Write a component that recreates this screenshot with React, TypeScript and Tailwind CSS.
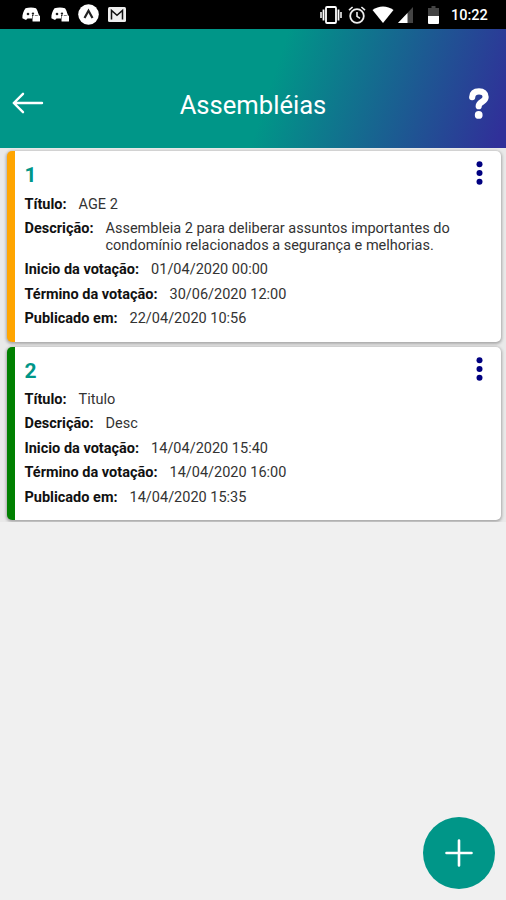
import { ReactNode } from "react";

type Assembly = {
  id: number;
  accent: string;
  title: string;
  description: string;
  start: string;
  end: string;
  published: string;
};

const assemblies: Assembly[] = [
  {
    id: 1,
    accent: "border-[#ffa500]",
    title: "AGE 2",
    description:
      "Assembleia 2 para deliberar assuntos importantes do condomínio relacionados a segurança e melhorias.",
    start: "01/04/2020 00:00",
    end: "30/06/2020 12:00",
    published: "22/04/2020 10:56",
  },
  {
    id: 2,
    accent: "border-[#008000]",
    title: "Titulo",
    description: "Desc",
    start: "14/04/2020 15:40",
    end: "14/04/2020 16:00",
    published: "14/04/2020 15:35",
  },
];

function DiscordIcon() {
  return (
    <svg width="18" height="15" viewBox="0 0 18 15" fill="#fff">
      <path d="M3.5 1.2C7 .2 11 .2 14 1.200c1.400 2 2.200 4 2.300 6.800H10v3.500H5.500L4 13 .4 11.200C.2 7.500 1.400 4 3.500 1.200Z" />
      <circle cx="6" cy="7" r="1.300" fill="#222" />
      <circle cx="11" cy="6.600" r="1.200" fill="#222" />
      <rect x="10.500" y="8.500" width="7.500" height="6" rx=".6" />
      <path d="M12.300 9V7.800a2 2 0 0 1 4 0V9" fill="none" stroke="#fff" />
    </svg>
  );
}

function StatusBar() {
  return (
    <div className="flex h-[29px] items-center justify-between bg-black pl-[22px] pr-[18px] text-white">
      <div className="flex items-center">
        <DiscordIcon />
        <span className="w-[11px]" />
        <DiscordIcon />
        <svg className="ml-[9px]" width="21" height="21" viewBox="0 0 21 21">
          <circle cx="10.500" cy="10.500" r="10.300" fill="#fff" />
          <path d="m6.500 14 4-7.300 4 7.300" fill="none" stroke="#222" strokeWidth="2.200" />
        </svg>
        <svg className="ml-[9px]" width="18" height="15" viewBox="0 0 18 15">
          <rect width="18" height="15" rx="1.500" fill="#eee" />
          <path d="M3.500 12.500V3.500L9 8.300l5.500-4.800v9" fill="none" stroke="#111" strokeWidth="1.500" />
        </svg>
      </div>
      <div className="flex items-center">
        <svg width="22" height="18" viewBox="0 0 22 18" fill="none" stroke="#fff">
          <rect x="6" y="1" width="10" height="16" rx="1" strokeWidth="1.800" />
          <path d="M3.500 3.500v11M18.500 3.500v11" strokeWidth="1.800" />
          <path d="M1 6v6M21 6v6" strokeWidth="1.500" />
        </svg>
        <svg className="ml-[6px]" width="18" height="18" viewBox="0 0 18 18" fill="none" stroke="#eee">
          <circle cx="9" cy="10" r="6.800" strokeWidth="1.800" />
          <path d="M9 6v4.300l3 2M1 4.200 4.600 1M17 4.200 13.400 1" strokeWidth="1.600" />
        </svg>
        <svg className="ml-[6px]" width="22" height="17" viewBox="0 0 22 17">
          <path d="M11 17 .5 4C6.500-.8 15.500-.8 21.500 4Z" fill="#fff" />
        </svg>
        <svg className="ml-[4px]" width="16" height="16" viewBox="0 0 16 16">
          <path d="M0 16 15 0v16Z" fill="#444" />
          <path d="M0 16 9.500 5.900V16Z" fill="#fff" />
        </svg>
        <svg className="ml-[14px]" width="11" height="18" viewBox="0 0 11 18">
          <path d="M3.500 0h4v2H11v8H0V2h3.500Z" fill="#444" />
          <path d="M0 10h11v7q0 1-1 1H1q-1 0-1-1Z" fill="#fff" />
        </svg>
        <span className="mt-[3px] ml-[12px] w-[37px] text-[14.500px] font-medium leading-none whitespace-nowrap">10:22</span>
      </div>
    </div>
  );
}

function Header() {
  return (
    <header className="flex h-[119px] items-end justify-between bg-[linear-gradient(108deg,#009688_53%,#303099_98%)] pr-[17px] pb-[26px] pl-[12px] text-white">
      <svg className="mb-[8px]" width="32" height="22" viewBox="0 0 32 22" fill="none" stroke="#fff" strokeWidth="2.400" strokeLinecap="round" strokeLinejoin="round">
        <path d="M30 11H1.800M11 1.800 1.800 11l9.200 9.200" />
      </svg>
      <h1 className="mr-[7px] text-[25.600px] leading-[34px]">Assembléias</h1>
      <svg className="mb-[3px]" width="20" height="31" viewBox="0 0 20 31">
        <path d="M3.200 9.200C3.400 5.300 6 3.400 10 3.400c4.200 0 6.600 2 6.600 5.500 0 4.900-6.900 5-6.900 9.300" fill="none" stroke="#fff" strokeWidth="6.200" strokeLinecap="round" />
        <circle cx="9.700" cy="26.900" r="3.900" fill="#fff" />
      </svg>
    </header>
  );
}

function Row({ label, children }: { label: string; children: ReactNode }) {
  return (
    <div className="flex gap-[12px] pr-[20px]">
      <span className="shrink-0 font-bold text-[#111]">{label}</span>
      <span>{children}</span>
    </div>
  );
}

function AssemblyCard({ item }: { item: Assembly }) {
  return (
    <div className={`flex justify-between rounded-[5px] border-l-8 bg-white pt-[11px] pr-[18px] pb-[14.500px] pl-[9.500px] shadow-[0_1px_3px_1px_rgba(0,0,0,0.28)] ${item.accent}`}>
      <div className="flex-1 text-[14.500px] leading-[17px] text-[#333]">
        <h2 className="mb-[7.500px] text-[21px] leading-[26px] font-bold text-[#009688]">{item.id}</h2>
        <div className="flex flex-col gap-[7.400px]">
          <Row label="Título:">{item.title}</Row>
          <Row label="Descrição:">{item.description}</Row>
          <Row label="Inicio da votação:">{item.start}</Row>
          <Row label="Término da votação:">{item.end}</Row>
          <Row label="Publicado em:">{item.published}</Row>
        </div>
      </div>
      <svg className="-mt-px" width="7" height="24" viewBox="0 0 7 24" fill="#000080">
        <circle cx="3.500" cy="3.300" r="3" />
        <circle cx="3.500" cy="12" r="3" />
        <circle cx="3.500" cy="20.700" r="3" />
      </svg>
    </div>
  );
}

export default function App() {
  return (
    <div className="flex h-[900px] w-[506px] flex-col bg-[#f0f0f0] font-[Roboto,sans-serif]">
      <StatusBar />
      <Header />
      <main className="flex flex-col gap-[5px] overflow-hidden bg-[#e9e9e9] pt-[3px] pr-[5px] pb-[2px] pl-[7px]">
        {assemblies.map((item) => (
          <AssemblyCard key={item.id} item={item} />
        ))}
      </main>
      <button className="mt-auto mr-[11px] mb-[11px] flex size-[72px] items-center justify-center self-end rounded-full bg-[#009688]">
        <svg width="28" height="28" viewBox="0 0 28 28" stroke="#fff" strokeWidth="2.600" strokeLinecap="round">
          <path d="M14 1.500v25M1.500 14h25" />
        </svg>
      </button>
    </div>
  );
}
